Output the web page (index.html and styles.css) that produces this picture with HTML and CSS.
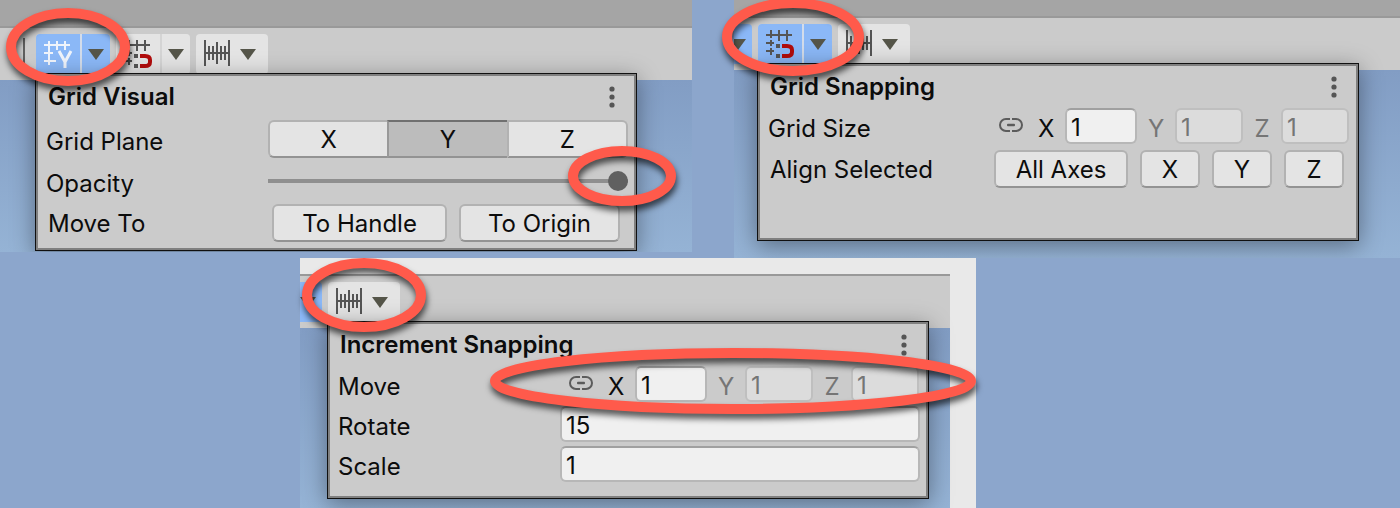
FILE: index.html
```html
<!DOCTYPE html>
<html lang="en">
<head>
<meta charset="utf-8">
<title>Grid and snapping overlays</title>
<link rel="stylesheet" href="styles.css">
</head>
<body>
<svg class="defs" width="0" height="0" aria-hidden="true">
  <symbol id="arrow" viewBox="0 0 28 40"><path d="M6 15h16l-8 11z" fill="#555549"/></symbol>
  <symbol id="grid-snap" viewBox="0 0 44 40">
    <path d="M8 11h26M8 19h8M8 27h8M13 6v8M13 16v6M13 24v7M21 6v11M29 6v11" fill="none" stroke="#555" stroke-width="2"/>
    <path d="M18 20h4v4h-4zM18 30h4v4h-4z" fill="#555"/>
    <path d="M24 22h5q5 0 5 4v2q0 4-5 4h-5" fill="none" stroke="#b10c0c" stroke-width="4"/>
  </symbol>
  <symbol id="increment" viewBox="0 0 44 40">
    <path d="M9 6v26M33 6v26M9 19h24M13 12v14M17 12v14M21 8v22M25 12v14M29 12v14" fill="none" stroke="#555" stroke-width="2"/>
  </symbol>
  <symbol id="link" viewBox="0 0 24 14">
    <path d="M11 1H7a6 6 0 0 0 0 12h4M13 1h4a6 6 0 0 1 0 12h-4" fill="none" stroke="#5c5c5c" stroke-width="2"/>
    <rect x="8" y="5.7" width="8" height="2.6" rx="1" fill="#5c5c5c"/>
  </symbol>
  <symbol id="dots" viewBox="0 0 6 22">
    <circle cx="3" cy="3" r="2.6"/><circle cx="3" cy="11" r="2.6"/><circle cx="3" cy="19" r="2.6"/>
  </symbol>
</svg>

<main class="board">
  <section class="shot shot-visual">
    <div class="capture">
      <div class="titlebar"></div>
      <div class="toolbar">
        <span class="separator"></span>
        <div class="group active">
          <button class="tool" aria-label="Grid visual">
            <svg width="44" height="40" viewBox="0 0 44 40" fill="none" stroke="#f0f4fb">
              <path d="M8 11h26M8 19h9M8 27h12M13 7v24M21 7v9M29 7v9" stroke-width="2"/>
              <path d="M23 17l6 11v6M35 17l-6 11" stroke-width="3"/>
            </svg>
          </button>
          <button class="drop" aria-label="Grid visual options"><svg width="28" height="40"><use href="#arrow"/></svg></button>
        </div>
        <div class="group">
          <button class="tool" aria-label="Grid snapping"><svg width="44" height="40"><use href="#grid-snap"/></svg></button>
          <button class="drop" aria-label="Grid snapping options"><svg width="28" height="40"><use href="#arrow"/></svg></button>
        </div>
        <button class="single" aria-label="Increment snapping"><svg width="44" height="40"><use href="#increment"/></svg><svg width="28" height="40"><use href="#arrow"/></svg></button>
      </div>
      <div class="scene">
        <div class="panel panel-visual">
          <header class="head"><h2>Grid Visual</h2><button class="menu" aria-label="More"><svg width="6" height="22"><use href="#dots"/></svg></button></header>
          <div class="row tall">
            <span class="label low">Grid Plane</span>
            <div class="segments"><button>X</button><button class="on">Y</button><button>Z</button></div>
          </div>
          <div class="row tall">
            <label class="label low" for="opacity">Opacity</label>
            <input class="slider" id="opacity" type="range" min="0" max="100" value="100">
          </div>
          <div class="row tall inset">
            <span class="label">Move To</span>
            <div class="actions"><button class="btn handle">To Handle</button><button class="btn origin">To Origin</button></div>
          </div>
        </div>
      </div>
    </div>
    <svg class="ring ring-tool" width="124" height="78"><ellipse cx="62" cy="39" rx="57" ry="34"/></svg>
    <svg class="ring ring-opacity" width="108" height="60"><ellipse cx="54" cy="30" rx="49" ry="25"/></svg>
  </section>

  <section class="shot shot-snap">
    <div class="capture">
      <div class="titlebar"></div>
      <div class="toolbar">
        <div class="group active"><button class="drop" aria-label="Grid visual options"><svg width="28" height="40"><use href="#arrow"/></svg></button></div>
        <div class="group active">
          <button class="tool" aria-label="Grid snapping"><svg width="44" height="40"><use href="#grid-snap"/></svg></button>
          <button class="drop" aria-label="Grid snapping options"><svg width="28" height="40"><use href="#arrow"/></svg></button>
        </div>
        <button class="single" aria-label="Increment snapping"><svg width="44" height="40"><use href="#increment"/></svg><svg width="28" height="40"><use href="#arrow"/></svg></button>
      </div>
      <div class="scene">
        <div class="panel panel-snap">
          <header class="head"><h2>Grid Snapping</h2><button class="menu" aria-label="More"><svg width="6" height="22"><use href="#dots"/></svg></button></header>
          <div class="row">
            <span class="label low">Grid Size</span>
            <div class="vector">
              <button class="link" aria-label="Link axes"><svg width="24" height="14"><use href="#link"/></svg></button>
              <label for="gx">X</label><input class="field main" id="gx" value="1">
              <label class="off" for="gy">Y</label><input class="field" id="gy" value="1" disabled>
              <label class="off" for="gz">Z</label><input class="field" id="gz" value="1" disabled>
            </div>
          </div>
          <div class="row tall inset">
            <span class="label">Align Selected</span>
            <div class="actions"><button class="btn axes">All Axes</button><button class="btn axis">X</button><button class="btn axis">Y</button><button class="btn axis">Z</button></div>
          </div>
        </div>
      </div>
    </div>
    <svg class="ring ring-snap" width="142" height="78"><ellipse cx="71" cy="39" rx="66" ry="34"/></svg>
  </section>

  <section class="shot shot-increment">
    <div class="capture">
      <div class="titlebar"></div>
      <div class="toolbar">
        <div class="group active"><button class="drop" aria-label="Grid snapping options"><svg width="28" height="40"><use href="#arrow"/></svg></button></div>
        <button class="single" aria-label="Increment snapping"><svg width="44" height="40"><use href="#increment"/></svg><svg width="28" height="40"><use href="#arrow"/></svg></button>
      </div>
      <div class="scene">
        <div class="panel panel-increment">
          <header class="head"><h2>Increment Snapping</h2><button class="menu" aria-label="More"><svg width="6" height="22"><use href="#dots"/></svg></button></header>
          <div class="row">
            <span class="label low">Move</span>
            <div class="vector">
              <button class="link" aria-label="Link axes"><svg width="24" height="14"><use href="#link"/></svg></button>
              <label for="mx">X</label><input class="field main" id="mx" value="1">
              <label class="off" for="my">Y</label><input class="field" id="my" value="1" disabled>
              <label class="off" for="mz">Z</label><input class="field" id="mz" value="1" disabled>
            </div>
          </div>
          <div class="row"><label class="label low" for="rotate">Rotate</label><input class="field wide" id="rotate" value="15"></div>
          <div class="row"><label class="label low" for="scale">Scale</label><input class="field wide" id="scale" value="1"></div>
        </div>
      </div>
    </div>
    <svg class="ring ring-increment" width="124" height="74"><ellipse cx="62" cy="37" rx="57" ry="32"/></svg>
    <svg class="ring ring-move" width="486" height="66"><ellipse cx="243" cy="33" rx="238" ry="28"/></svg>
  </section>
</main>
</body>
</html>
```
FILE: styles.css
```css
* { box-sizing: border-box; }

body {
  margin: 0;
  background: #8ca6cc;
  color: #0c0c0c;
  font-family: Inter, "Liberation Sans", sans-serif;
  font-size: 24px;
  line-height: 30px;
}

button, input { font: inherit; color: inherit; margin: 0; }
button { padding: 0; border: 0; background: none; }
svg { display: block; }
.defs { position: absolute; }

.board {
  display: grid;
  grid-template-columns: 300fr 392fr 42fr 242fr 424fr;
  min-height: 100vh;
}

.shot { position: relative; min-width: 0; }
.shot-visual { grid-column: 1 / 3; grid-row: 1; align-self: start; }
.shot-snap { grid-column: 4 / 6; grid-row: 1; }
.shot-increment { grid-column: 2 / 5; grid-row: 2; }

.capture { overflow: hidden; }
.titlebar { background: #a5a5a5; border-bottom: 2px solid #999; }
.shot-visual .titlebar { height: 28px; }
.shot-snap .titlebar { height: 18px; }
.shot-increment .titlebar { height: 2px; }
.shot-increment .capture { padding: 16px 26px 0 0; background: #e9e9e9; }

.toolbar {
  display: flex;
  gap: 6px;
  padding: 6px 0;
  background: #cbcbcb;
}
.shot-visual .toolbar { padding-left: 23px; }
.shot-snap .group:first-child { margin-left: -10px; }
.shot-increment .group:first-child { margin-left: -6px; }

.separator { width: 2px; margin: 4px 5px 0 0; background: #606060; }
.group { display: flex; gap: 2px; border-radius: 4px; overflow: hidden; background: #d4d4d4; }
.group button { background: #e4e4e4; }
.group.active { background: #d3dcea; }
.group.active button { background: #8bb8f7; }
.single { display: flex; border-radius: 4px; background: #e4e4e4; }
.single svg + svg { margin-left: -6px; margin-right: 6px; }

.scene { display: flex; flex-direction: column; background: linear-gradient(#829dc4, #95b3d5); }
.shot-visual .scene { padding: 0 55px 1px 35px; }
.shot-snap .scene { padding: 0 41px 17px 23px; }
.shot-increment .scene { padding: 0 21px 9px 27px; }

.panel {
  display: flex;
  flex-direction: column;
  gap: 4px;
  min-height: 178px;
  margin-top: -7px;
  padding: 2px 8px 6px 10px;
  border: 1px solid #101010;
  outline: 2px solid #808080;
  outline-offset: -3px;
  background: #cbcbcb;
  box-shadow: 0 5px 22px rgba(0, 0, 0, .38);
}
.panel-snap { gap: 6px; }

.head { display: flex; justify-content: space-between; align-items: center; height: 42px; padding: 0 13px 0 2px; }
.panel-visual .head { margin-bottom: -2px; }
.panel-snap .head { margin-bottom: -6px; }
.panel-increment .head { margin-bottom: -4px; }
.head h2 { margin: 0; font-size: 24px; font-weight: 600; }
.menu { fill: #555; }

.row { display: flex; justify-content: space-between; align-items: center; height: 36px; }
.row.tall { height: 38px; }
.row.inset { padding: 0 8px 0 2px; }
.panel-snap .row.inset { padding-right: 6px; }
.label { padding-top: 2px; white-space: nowrap; }
.label.low { padding-top: 6px; }

.segments { display: flex; width: 360px; }
.segments button, .btn {
  height: 38px;
  border: 2px solid #b2b2b2;
  border-bottom-color: #939393;
  background: #e4e4e4;
}
.segments button { flex: 1; border-right-width: 0; padding-top: 2px; }
.segments button:first-child { border-radius: 6px 0 0 6px; }
.segments button:last-child { border-right-width: 2px; border-radius: 0 6px 6px 0; }
.segments .on { background: #bcbcbc; border-color: #707070 #999 #939393; }

.actions { display: flex; gap: 12px; }
.btn { padding-top: 2px; border-radius: 6px; white-space: nowrap; }
.handle { width: 175px; }
.origin { width: 161px; }
.axes { width: 134px; }
.axis { width: 60px; }

.slider { appearance: none; width: 360px; height: 20px; background: none; }
.slider::-webkit-slider-runnable-track { height: 4px; background: #8f8f8f; }
.slider::-webkit-slider-thumb { appearance: none; width: 20px; height: 20px; margin-top: -8px; border-radius: 50%; background: #606060; }

.vector { display: flex; align-items: center; gap: 11px; padding-right: 1px; }
.vector label { width: 16px; padding-top: 6px; text-align: center; }
.vector .off { color: #757575; }
.link { display: flex; justify-content: center; width: 32px; padding-bottom: 2px; }

.field {
  width: 68px;
  height: 36px;
  padding: 2px 4px 0;
  border: 2px solid #b7b7b7;
  border-top-color: #a0a0a0;
  border-radius: 6px;
  background: #f0f0f0;
}
.field.main { width: 72px; }
.field.wide { width: 360px; }
.field:disabled { color: #757575; background: #dcdcdc; border-color: #bfbfbf; }

.ring {
  position: absolute;
  overflow: visible;
  fill: none;
  stroke: #ff5a4b;
  stroke-width: 10px;
  filter: drop-shadow(1px 5px 3px rgba(0, 0, 0, .65));
  pointer-events: none;
}
.ring-tool { left: 6px; top: 8px; }
.ring-opacity { right: 16px; top: 146px; }
.ring-snap { left: -12px; top: -2px; }
.ring-increment { left: 2px; top: 0; }
.ring-move { right: 0; top: 90px; }
```
